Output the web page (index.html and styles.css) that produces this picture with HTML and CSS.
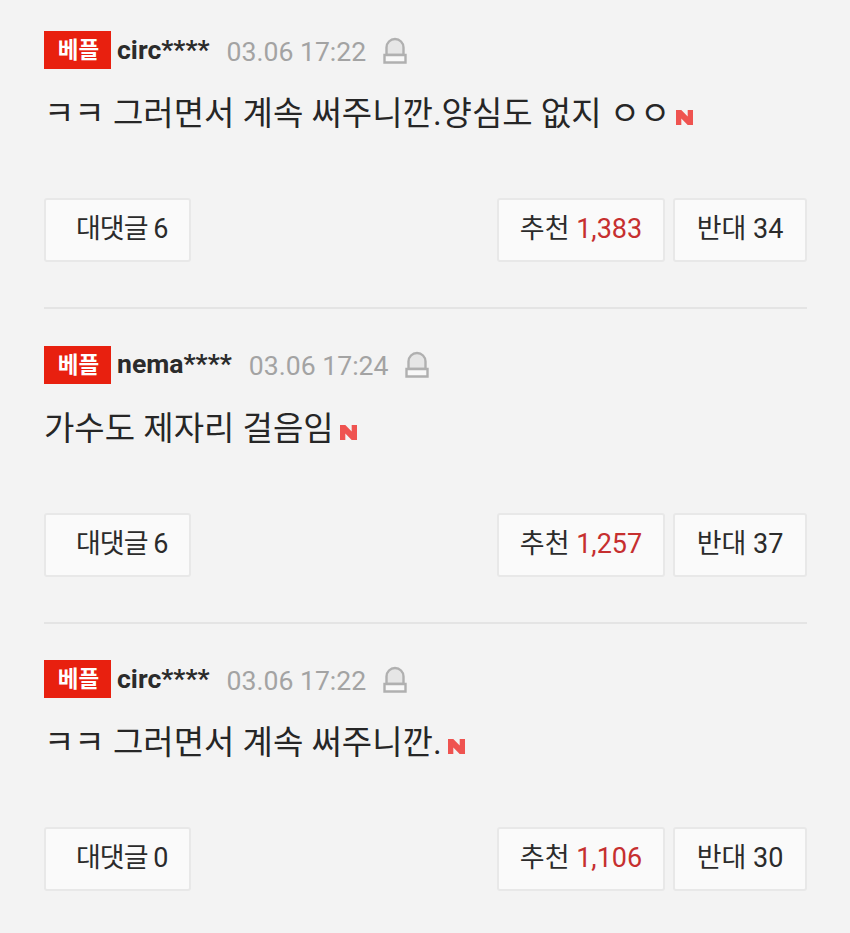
FILE: index.html
```html
<!DOCTYPE html>
<html lang="ko">
<head>
    <meta charset="UTF-8">
    <meta name="viewport" content="width=device-width, initial-scale=1.0">
    <title>베플 댓글</title>
    <link rel="stylesheet" href="styles.css">
</head>
<body>
    <div class="comment">
        <div class="meta">
            <span class="badge">베플</span>
            <span class="name">circ****</span>
            <span class="time">03.06 17:22</span>
            <svg class="bell" viewBox="0 0 24 27"><path class="dome" d="M3.5 18V10.5a8.5 8.5 0 0 1 17 0V18z"/><path class="base" d="M1.5 18h21v7.5h-21z"/></svg>
        </div>
        <p class="text">ㅋㅋ 그러면서 계속 써주니깐.양심도 없지 ㅇㅇ<svg class="new" viewBox="0 0 16 14"><path d="M0 0h5l6 6V0h5v14h-5L5 8v6H0z"/></svg></p>
        <div class="actions">
            <span class="btn reply">대댓글 6</span>
            <div class="votes">
                <span class="btn up">추천 <em>1,383</em></span>
                <span class="btn down">반대 34</span>
            </div>
        </div>
    </div>
    <div class="comment">
        <div class="meta">
            <span class="badge">베플</span>
            <span class="name">nema****</span>
            <span class="time">03.06 17:24</span>
            <svg class="bell" viewBox="0 0 24 27"><path class="dome" d="M3.5 18V10.5a8.5 8.5 0 0 1 17 0V18z"/><path class="base" d="M1.5 18h21v7.5h-21z"/></svg>
        </div>
        <p class="text">가수도 제자리 걸음임<svg class="new" viewBox="0 0 16 14"><path d="M0 0h5l6 6V0h5v14h-5L5 8v6H0z"/></svg></p>
        <div class="actions">
            <span class="btn reply">대댓글 6</span>
            <div class="votes">
                <span class="btn up">추천 <em>1,257</em></span>
                <span class="btn down">반대 37</span>
            </div>
        </div>
    </div>
    <div class="comment">
        <div class="meta">
            <span class="badge">베플</span>
            <span class="name">circ****</span>
            <span class="time">03.06 17:22</span>
            <svg class="bell" viewBox="0 0 24 27"><path class="dome" d="M3.5 18V10.5a8.5 8.5 0 0 1 17 0V18z"/><path class="base" d="M1.5 18h21v7.5h-21z"/></svg>
        </div>
        <p class="text">ㅋㅋ 그러면서 계속 써주니깐.<svg class="new" viewBox="0 0 16 14"><path d="M0 0h5l6 6V0h5v14h-5L5 8v6H0z"/></svg></p>
        <div class="actions">
            <span class="btn reply">대댓글 0</span>
            <div class="votes">
                <span class="btn up">추천 <em>1,106</em></span>
                <span class="btn down">반대 30</span>
            </div>
        </div>
    </div>
</body>
</html>
```

FILE: styles.css
```css
html, body {
    overflow: hidden;
}
body {
    font-family: Roboto, "Noto Sans CJK KR", sans-serif;
    margin: 0;
    padding: 31px 43px 0 44px;
    background-color: #f3f3f3;
    color: #2b2b2b;
}
.comment {
    height: 278px;
    box-sizing: border-box;
    margin-bottom: 36.5px;
    border-bottom: 2px solid #e4e4e4;
}
.comment:last-child {
    border-bottom: none;
}
.meta {
    display: flex;
    align-items: center;
    height: 38px;
}
.badge {
    width: 67px;
    height: 38px;
    padding-left: 2px;
    box-sizing: border-box;
    line-height: 38px;
    text-align: center;
    background-color: #e8200f;
    color: #fff;
    font-size: 22.5px;
    font-weight: 700;
}
.name {
    margin-left: 6px;
    font-size: 26.6px;
    font-weight: 700;
    position: relative;
    top: -1px;
}
.time {
    margin-left: 17px;
    font-size: 26.6px;
    color: #a3a3a3;
    position: relative;
    top: 1px;
}
.bell {
    width: 24px;
    height: 27px;
    margin-left: 17px;
    flex: none;
    stroke: #b0b0b0;
    stroke-width: 2.4;
}
.dome {
    fill: #e6e6e6;
}
.base {
    fill: #f8f8f8;
}
.text {
    margin: 23px 0 0;
    height: 44px;
    line-height: 44px;
    font-size: 33px;
    color: #262626;
    white-space: nowrap;
}
.new {
    width: 17px;
    height: 15px;
    margin-left: 6px;
    fill: #ef5350;
    vertical-align: 0;
}
.actions {
    display: flex;
    justify-content: space-between;
    margin-top: 62px;
}
.votes {
    display: flex;
    gap: 8px;
}
.btn {
    display: block;
    box-sizing: border-box;
    height: 64px;
    line-height: 58px;
    text-align: center;
    font-size: 27px;
    background-color: #fafafa;
    border: 2px solid #e8e8e8;
    border-radius: 3px;
    white-space: nowrap;
}
.reply {
    width: 147px;
    padding-left: 30px;
    text-align: left;
    letter-spacing: -1px;
}
.up {
    width: 168px;
}
.down {
    width: 134px;
}
.up em {
    font-style: normal;
    color: #c62f2f;
}
```
